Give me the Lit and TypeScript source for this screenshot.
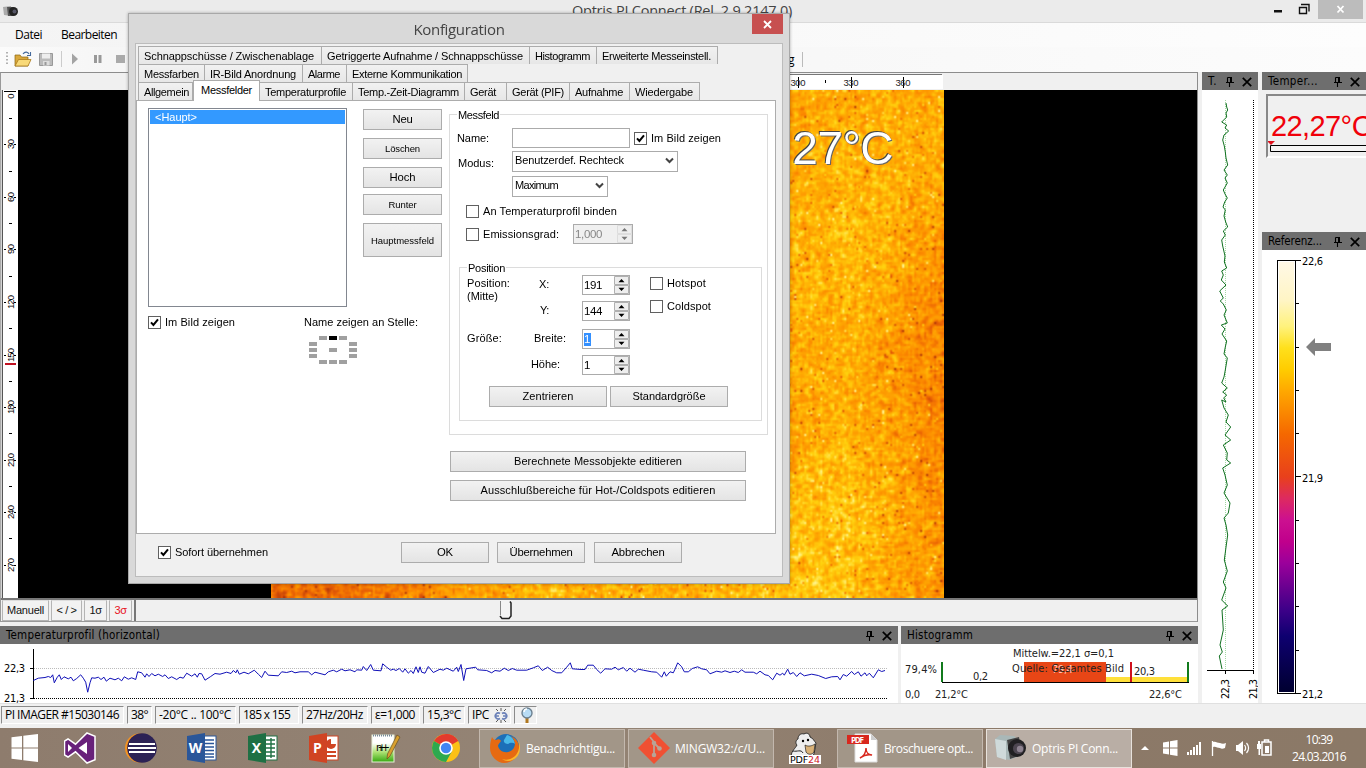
import { LitElement, html, svg, css } from "lit";
import { customElement, property } from "lit/decorators.js";

/** One line of text, tracked so that it fills a given width. */
@customElement("fit-text")
class FitText extends LitElement {
  @property({ type: Number }) w = 0;
  @property() text = "";
  static styles = css`
    :host { display: inline-block; white-space: pre; flex: none; }
  `;
  render() {
    return html`<span>${this.text}</span>`;
  }
  firstUpdated() {
    const span = this.renderRoot.querySelector("span") as HTMLElement;
    if (!this.w || !this.text) return;
    const natural = span.getBoundingClientRect().width;
    span.style.letterSpacing = (this.w - natural) / this.text.length + "px";
  }
}
const f = (text: string, w: number) => html`<fit-text .w=${w} .text=${text}></fit-text>`;

/** Infrared camera picture with sensor noise. */
@customElement("thermal-image")
class ThermalImage extends LitElement {
  static styles = css`
    :host { display: block; width: 673px; height: 508px; }
    canvas { display: block; width: 673px; height: 508px; }
  `;
  render() {
    return html`<canvas width="337" height="254"></canvas>`;
  }
  firstUpdated() {
    const cv = this.renderRoot.querySelector("canvas") as HTMLCanvasElement;
    const c = cv.getContext("2d")!;
    const W = 337, H = 254;
    const img = c.createImageData(W, H);
    let s = 12345;
    const rnd = () => {
      s = (Math.imul(s, 1664525) + 1013904223) >>> 0;
      return s / 4294967296;
    };
    const raw = new Float32Array(W * H).map(() => rnd() + rnd() - 1);
    const cols = new Float32Array(W).map(() => rnd() - 0.5);
    const stops: number[][] = [
      [0, 170, 50, 10], [0.25, 230, 92, 5], [0.45, 252, 135, 0],
      [0.65, 255, 172, 3], [0.82, 255, 212, 15], [1, 255, 246, 150],
    ];
    const g = (x: number, y: number) =>
      raw[Math.min(H - 1, Math.max(0, y)) * W + Math.min(W - 1, Math.max(0, x))];
    for (let y = 0; y < H; y++) {
      for (let x = 0; x < W; x++) {
        const n = g(x, y) * 0.6 + (g(x - 1, y) + g(x + 1, y) + g(x, y - 1) + g(x, y + 1)) * 0.28;
        const u = x / W, v = y / H;
        let t = 0.67 + n * 0.27 + cols[x] * 0.06;
        t -= 0.34 * Math.max(0, 1 - u * 2.4) * (0.4 + 0.6 * v);
        t -= 0.2 * Math.max(0, (u - 0.85) / 0.15) * (0.7 + 0.4 * Math.sin((v - 0.15) * 4));
        t += 0.05 * Math.sin(u * 14 + v * 3) + 0.04 * Math.cos(v * 9 + u * 5);
        const sp = rnd();
        if (sp < 0.014) t -= 0.42;
        else if (sp > 0.99) t += 0.32;
        t = Math.min(1, Math.max(0, t));
        let k = 1;
        while (stops[k][0] < t) k++;
        const a = stops[k - 1], b = stops[k], r = (t - a[0]) / (b[0] - a[0]);
        const o = (y * W + x) * 4;
        for (let i = 0; i < 3; i++) img.data[o + i] = a[i + 1] + (b[i + 1] - a[i + 1]) * r;
        img.data[o + 3] = 255;
      }
    }
    c.putImageData(img, 0, 0);
  }
}

const PROFILE_A =
  "100,540 115,533 135,531 145,528 152,531 158,523 163,547 172,530 178,523 184,537 192,529 205,535 213,530 220,541 230,534 242,523 250,533 257,545 263,575 270,547 275,532 285,533 295,530 303,537 312,530 319,542 330,533 345,538 355,533 365,541 373,529 385,536 395,532 407,537 413,514 425,517 435,530 440,520 447,528 455,519 465,526 475,521 488,528 495,523 505,534 515,529 530,537 540,530 550,533 560,518 575,527 585,520 592,530 597,519 605,520 615,539 632,528 645,519 660,521 680,515 693,519 700,510 708,517 712,508 718,521 732,515 745,520 763,509 775,521 785,531 795,512 805,524 835,526 845,514 860,516 875,512 885,517 900,514 925,514 935,523 945,515 975,523 985,514 1000,509 1010,514 1025,506 1035,511 1050,508 1065,514 1070,508 1085,509 1090,498 1100,510 1112,492 1120,509 1143,511 1148,490 1160,500 1172,509 1180,506 1188,510 1198,504 1208,515 1215,505 1225,518 1233,510 1240,519 1248,499 1255,516 1260,499 1265,515 1275,518 1285,498 1300,516 1320,506 1330,509 1340,503 1360,512";
const PROFILE_B =
  "5,500 10,513 18,492 26,540 33,505 62,500 68,508 95,510 110,517 120,510 135,512 148,503 160,510 172,504 185,509 215,509 235,502 250,496 262,510 278,500 290,510 305,517 320,517 335,500 346,487 352,505 378,507 390,507 398,494 415,494 425,507 437,518 450,505 470,506 480,500 490,508 505,501 515,512 525,503 540,515 550,506 565,509 590,514 605,515 620,530 628,514 634,527 645,514 655,517 660,506 668,487 680,499 688,514 700,514 712,504 728,499 740,505 755,508 765,520 785,512 800,515 810,511 825,516 838,512 850,516 860,508 870,515 895,515 905,520 915,512 930,523 940,525 953,538 965,518 975,524 983,518 988,524 998,506 1005,521 1015,516 1025,528 1035,517 1048,526 1070,521 1090,525 1112,534 1130,529 1148,528 1155,538 1165,522 1175,527 1190,513 1198,522 1210,514 1218,527 1230,517 1235,526 1243,518 1255,532 1270,508 1280,513 1290,510";
const pts = (str: string, dx: number) =>
  str.split(" ").map((p) => {
    const [x, y] = p.split(",").map(Number);
    return `${((x + dx) / 3).toFixed(1)},${((y - 432) / 3 + 0.5).toFixed(1)}`;
  }).join(" ");
const PROFILE = pts(PROFILE_A, 0) + " " + pts(PROFILE_B, 1365);

const VPROFILE =
  "948,103 950,107 953,110 948,113 950,117 935,122 950,125 945,128 956,131 942,135 938,140 943,146 946,152 948,158 953,165 942,170 952,175 945,178 952,183 940,190 945,194 952,198 944,202 939,207 946,210 942,216 947,222 953,227 940,231 946,235 935,240 938,246 945,256 943,262 950,268 935,271 940,275 934,280 948,285 929,291 940,298 931,301 940,304 949,310 942,315 952,323 934,325 945,329 936,334 950,341 946,347 942,354 952,358 946,370 942,377 935,383 952,388 938,392 950,395 941,398 948,402 935,400 942,408 955,415 948,422 962,427 945,435 962,440 940,445 952,453 950,460 962,463 938,468 945,475 952,485 942,493 960,503 955,513 942,518 948,525 953,535 949,545 943,560 952,571 940,582 948,588 935,600 953,606 936,610 940,630 930,645 937,652 928,656 936,669"
    .split(" ").map((p) => {
      const [x, y] = p.split(",").map(Number);
      return `${(x / 3 - 292).toFixed(1)},${y - 90}`;
    }).join(" ");

const pin = svg`<path d="M2.500 1.500h4M2.500 1.500v5M1 6.500h8M4.500 7v4" fill="none" stroke="#000" stroke-width="1.100"/><path d="M5 1h2v5.500H5z"/>`;
const cross = svg`<path d="M.8.8l8.400 8.400M9.200.8L.8 9.200" fill="none" stroke="#000" stroke-width="1.700"/>`;

@customElement("app-root")
class AppRoot extends LitElement {
  static styles = css`
    :host { display: block; width: 1366px; height: 768px; overflow: hidden; position: relative; background: #f0f0f0; color: #000;
      font-family: "Liberation Sans", sans-serif; font-size: 11px; line-height: 13px; }
    * { box-sizing: border-box; }
    svg { display: block; flex: none; }
    .app { display: flex; flex-direction: column; height: 768px; }
    .ui { font-family: "Open Sans", sans-serif; }
    .tah { font-family: "DejaVu Sans Condensed", "DejaVu Sans", sans-serif; }

    .titlebar { height: 23px; background: #ebebeb; border-bottom: 1px solid #dadada; display: flex; align-items: flex-start; }
    .titlebar .ic { margin: 4px 0 0 2px; }
    .titlebar .txt { margin: 1px 0 0 552px; font: 14.5px/20px "Open Sans", sans-serif; color: #444; }
    .titlebar .win { margin-left: auto; display: flex; }
    .menubar { height: 24px; background: linear-gradient(90deg, #f4f4f4, #fdfdfd); display: flex; align-items: center; padding: 0 0 1px 15px; gap: 19px; font-size: 12px; }
    .toolbar { height: 25px; background: linear-gradient(90deg, #fbfbfb 0, #f6f6f6 8%, #f8f8f8 60%, #fcfcfc); display: flex; align-items: center; }
    .toolbar .rest { margin-left: 660px; display: flex; gap: 7px; align-items: center; font-size: 12px; }
    .vsep { width: 1px; height: 15px; background: #bbb; }

    .work { height: 631px; display: grid; grid-template-columns: 1198px 56px 104px; column-gap: 4px; }
    .left { display: flex; flex-direction: column; }
    .viewer { height: 550px; display: flex; flex-direction: column; border-top: 1px solid #8c8c8c; border-right: 1px solid #8c8c8c; border-left: 1px solid #999; border-bottom: 1px solid #999; }
    .scene { height: 508px; display: flex; margin-left: -1px; }
    .black { flex: 1; background: #000; display: flex; padding-left: 253px; position: relative; }
    .reading { position: absolute; left: 712px; top: 33px; font-size: 46px; line-height: 50px; color: #fff;
      text-shadow: -1px -1px 0 #444, 1px 1px 0 #666; }
    .slider { flex: 1; display: flex; align-items: stretch; border-top: 2px solid #777; background: #f0f0f0; padding-left: 1px; gap: 2px; }
    .slider .sb { border: 1px solid #b4b4b4; border-top-color: #ddd; display: flex; align-items: center; justify-content: center; background: #f2f2f2; height: 21px; color: #111; }
    .slider .track { flex: 1; border-left: 2px solid #777; padding-left: 363px; }
    .w47 { width: 47px; } .w31 { width: 31px; } .w23 { width: 23px; }
    .red { color: #e8111c !important; }

    .hdr { background: #6e6e6e; height: 18px; display: flex; align-items: center; color: #000; flex: none; font-size: 11.5px; padding-bottom: 0; }
    .hdr .r { margin-left: auto; display: flex; align-items: center; gap: 8px; padding-right: 6px; padding-top: 1px; }
    .bottom { margin-top: 4px; display: grid; grid-template-columns: 898px 297px; column-gap: 3px; height: 77px; }
    .panel { display: flex; flex-direction: column; background: #fff; overflow: hidden; }
    .pl6 { padding-left: 6px; }
    .right { display: flex; flex-direction: column; background: #fff; overflow: hidden; }
    .tempbox { height: 142px; background: #f0f0f0; padding: 4px 0 0 4px; }
    .tempbox .in { border-top: 2px solid #888; border-left: 2px solid #888; border-bottom: 2px solid #fff; height: 64px; overflow: hidden; padding: 15px 0 0 3px; color: #f0000a; }
    .tempbox .big { font-size: 29px; line-height: 30px; white-space: pre; }
    .tempbox svg { margin: 0 0 0 -4px; }

    .status { height: 25px; background: #f0f0f0; border-top: 1px solid #e0e0e0; display: flex; padding: 2px 0 0 1px; gap: 3px; font: 12px/16px "Open Sans", sans-serif; }
    .cell { height: 18px; border: 1px solid; border-color: #8b8b8b #fff #fff #8b8b8b; padding-left: 3px; display: flex; align-items: center; gap: 4px; }

    .taskbar { height: 40px; background: linear-gradient(90deg, #8e7c6d, #948475 40%, #8c7968 75%, #8b7967); display: flex; align-items: center; position: relative; }
    .taskbar .apps { display: flex; width: 479px; padding-left: 8px; gap: 29px; align-items: center; flex: none; }
    .vs { margin-left: -5px; }
    .tb { height: 39px; border: 1px solid #c3b8ae; background: #a29688; display: flex; align-items: center; color: #fff; font: 12px "Open Sans", sans-serif; flex: none; }
    .tb.on { background: #b9aea5; border-color: #e8e2dc; }
    .pdf24 { width: 62px; display: flex; justify-content: center; flex: none; }
    .tray { display: flex; align-items: center; margin-left: 9px; }
    .clock { color: #fff; font: 12px/17px "Open Sans", sans-serif; display: flex; flex-direction: column; align-items: center; width: 58px; margin-left: 13px; }

    .dialog { position: absolute; left: 128px; top: 13px; width: 662px; height: 571px; background: #d9d9d9; border: 1px solid #a8a8a8; box-shadow: 0 0 3px rgba(0,0,0,.3); padding: 0 6px; }
    .dtitle { height: 29px; display: grid; grid-template-columns: 31px 1fr 31px; font: 15px/30px "Open Sans", sans-serif; color: #444; justify-items: center; }
    .close { width: 31px; height: 20px; background: #c75050; display: flex; align-items: center; justify-content: center; }
    .client { height: 534px; background: #f0f0f0; border: 1px solid #bcbcbc; padding-top: 2px; }
    .tabs { display: flex; height: 18px; padding-left: 2px; }
    .tab { height: 18px; border: 1px solid #acacac; border-bottom: 0; border-left-width: 0; background: linear-gradient(#f1f1f1, #e7e7e7); padding-left: 5px; display: flex; align-items: center; flex: none; padding-top: 1px; }
    .tab:first-child { border-left-width: 1px; }
    .tab.act { background: #fff; height: 21px; margin: -2px 0 0; border: 1px solid #acacac; border-bottom: 0; position: relative; padding: 0 0 1px 7px; }
    .page { width: 640px; height: 434px; border: 1px solid #acacac; background: #fff; padding: 7px 0 0 11px; display: flex; gap: 8px; }
    .lcol { width: 293px; }
    .lrow { display: flex; gap: 16px; }
    .list { width: 199px; height: 199px; border: 1px solid #828790; padding: 1px; flex: none; }
    .sel { height: 14px; background: #3399ff; color: #fff; padding-left: 5px; line-height: 15px; }
    .bcol { display: flex; flex-direction: column; padding-top: 1px; }
    .btn { border: 1px solid #acacac; background: linear-gradient(#f2f2f2, #e4e4e4); height: 21px; display: flex; align-items: center; justify-content: center; flex: none; }
    .b78 { width: 79px; } .b88 { width: 88px; } .b118 { width: 118px; } .b296 { width: 296px; }
    .s12 { font-size: 11.3px; } .s10 { font-size: 9.5px; }
    .mt8 { margin-top: 8px; } .mt6 { margin-top: 6px; } .tall { height: 34px; }
    .lopts { display: flex; justify-content: space-between; margin-top: 9px; padding-right: 23px; }
    .pos { margin: 7px 0 0 161px; }
    .chk { display: flex; align-items: center; gap: 4px; height: 13px; }
    fieldset { margin: 0; padding: 0; border: 1px solid #dcdcdc; min-width: 0; }
    legend { margin-left: 7px; padding: 0 1px; height: 13px; line-height: 14px; }
    .fm { width: 319px; height: 327px; }
    .row { display: flex; align-items: center; height: 20px; margin-left: 7px; }
    .lab { width: 55px; flex: none; }
    .low { padding: 5px 0 0 1px; }
    .inp { width: 118px; height: 20px; border: 1px solid #ababab; margin-right: 4px; }
    .select { height: 21px; border: 1px solid #ababab; display: flex; align-items: center; justify-content: space-between; padding: 0 3px 1px 2px; }
    .s166 { width: 166px; } .s96 { width: 96px; }
    .spin { width: 48px; height: 20px; border: 1px solid #ababab; display: flex; justify-content: space-between; align-items: center; padding: 0 0 0 1px; background: #fff; font-size: 11.5px; }
    .spin.dis { width: 60px; background: #f0f0f0; color: #888; margin-left: 14px; }
    .spin .mark { background: #3390ff; color: #fff; }
    .fp { width: 303px; height: 160px; margin: 17px 0 0 9px; }
    .grid { display: grid; grid-template-columns: 67px 48px 68px auto; grid-template-rows: 26px 28px 26px 20px; padding: 1px 0 0 7px; align-items: start; }
    .c { height: 20px; display: flex; align-items: center; margin-top: -1px; }
    .two { grid-row: span 2; display: flex; flex-direction: column; padding-top: 2px; }
    .g10 { gap: 10px; }
    .frow { display: flex; gap: 3px; margin: 11px 0 0 29px; }
    .wide { margin: 16px 0 0 1px; display: flex; flex-direction: column; gap: 8px; }
    .foot { display: flex; align-items: center; gap: 8px; margin: 8px 0 0 22px; }
    .foot .chk { width: 235px; }
    .ml5 { margin-left: 5px; } .ml6 { margin-left: 6px; } .mlm { margin-left: -3px; } .ml1 { margin-left: 1px; }
    .r1 { margin-top: 7px; } .r2 { margin-top: 3px; } .r3 { margin: 5px 0 0 62px; } .r4 { margin: 9px 0 0 16px; } .r5 { margin: 6px 0 0 16px; }
  `;

  private chk(on: boolean, label: string, w: number) {
    return html`<div class="chk">
      <svg width="13" height="13"><rect x=".5" y=".5" width="12" height="12" fill="#fff" stroke="#606060"/>${on
        ? svg`<path d="M3 6.400L5.400 9 10 3.400" fill="none" stroke="#000" stroke-width="2"/>` : ""}</svg>
      ${f(label, w)}</div>`;
  }
  private spin(v: string, w: number, dis = false, mark = false) {
    const c = dis ? "#777" : "#000";
    return html`<div class="spin ${dis ? "dis" : ""}"><span class="${mark ? "mark" : ""}">${f(v, w)}</span>
      <svg width="15" height="18"><path d="M.5.5h14v8H.5zM.5 9.500h14v8H.5z" fill="#eee" stroke=${dis ? "#ddd" : "#b0b0b0"}/>
      <path d="M7.500 3l3 3.200h-6zM7.500 15l3-3.200h-6z" fill=${c}/></svg></div>`;
  }
  private tab(label: string, tw: number, w: number, act = false) {
    return html`<div class="tab ${act ? "act" : ""}" style="width:${w}px">${f(label, tw)}</div>`;
  }
  private head(title: string, w: number) {
    return html`<div class="hdr tah pl6">${f(title, w)}<div class="r">
      <svg width="9" height="11">${pin}</svg><svg width="10" height="10">${cross}</svg></div></div>`;
  }
  private chevron() {
    return html`<svg width="9" height="7"><path d="M1 1.500l3.500 3.500L8 1.500" fill="none" stroke="#444" stroke-width="2"/></svg>`;
  }

  private dialog() {
    return html`<div class="dialog">
      <div class="dtitle"><span></span>${f("Konfiguration", 91)}
        <div class="close"><svg width="9" height="9"><path d="M1 1l7 7M8 1L1 8" stroke="#fff" stroke-width="1.800"/></svg></div></div>
      <div class="client">
        <div class="tabs">
          ${this.tab("Schnappschüsse / Zwischenablage", 170, 184)}${this.tab("Getriggerte Aufnahme / Schnappschüsse", 196, 208)}
          ${this.tab("Histogramm", 55, 67)}${this.tab("Erweiterte Messeinstell.", 109, 121)}
        </div>
        <div class="tabs">
          ${this.tab("Messfarben", 55, 67)}${this.tab("IR-Bild Anordnung", 86, 98)}${this.tab("Alarme", 32, 44)}${this.tab("Externe Kommunikation", 110, 121)}
        </div>
        <div class="tabs">
          ${this.tab("Allgemein", 45, 55)}${this.tab("Messfelder", 51, 67, true)}${this.tab("Temperaturprofile", 81, 93)}${this.tab("Temp.-Zeit-Diagramm", 101, 112)}
          ${this.tab("Gerät", 26, 42)}${this.tab("Gerät (PIF)", 52, 63)}${this.tab("Aufnahme", 48, 60)}${this.tab("Wiedergabe", 58, 70)}
        </div>
        <div class="page">
          <div class="lcol">
            <div class="lrow">
              <div class="list"><div class="sel">${f("<Haupt>", 42)}</div></div>
              <div class="bcol">
                <div class="btn b78 s12">${f("Neu", 20)}</div>
                <div class="btn b78 s10 mt8">${f("Löschen", 35)}</div>
                <div class="btn b78 s12 mt8">${f("Hoch", 26)}</div>
                <div class="btn b78 s10 mt6">${f("Runter", 28)}</div>
                <div class="btn b78 s10 mt8 tall">${f("Hauptmessfeld", 63)}</div>
              </div>
            </div>
            <div class="lopts">${this.chk(true, "Im Bild zeigen", 70)}${f("Name zeigen an Stelle:", 114)}</div>
            <svg class="pos" width="48" height="28" fill="#a0a0a0">
              <path d="M10 0h8v4h-8zM30 0h8v4h-8zM0 6h8v4H0zM40 6h8v4h-8zM0 12h8v4H0zM20 12h8v4h-8zM40 12h8v4h-8zM0 18h8v4H0zM40 18h8v4h-8zM10 24h8v4h-8zM20 24h8v4h-8zM30 24h8v4h-8z"/>
              <path d="M20 0h8v4h-8z" fill="#000"/></svg>
          </div>
          <div>
            <fieldset class="fm"><legend>${f("Messfeld", 41)}</legend>
              <div class="row r1"><span class="lab">${f("Name:", 32)}</span><div class="inp"></div>${this.chk(true, "Im Bild zeigen", 70)}</div>
              <div class="row r2"><span class="lab low">${f("Modus:", 36)}</span><div class="select s166">${f("Benutzerdef. Rechteck", 109)}${this.chevron()}</div></div>
              <div class="row r3"><div class="select s96">${f("Maximum", 43)}${this.chevron()}</div></div>
              <div class="r4">${this.chk(false, "An Temperaturprofil binden", 134)}</div>
              <div class="row r5">${this.chk(false, "Emissionsgrad:", 76)}${this.spin("1,000", 27, true)}</div>
              <fieldset class="fp"><legend>${f("Position", 37)}</legend>
                <div class="grid">
                  <div class="two"><span>${f("Position:", 43)}</span><span>${f("(Mitte)", 31)}</span></div>
                  <div class="c ml5">${f("X:", 10)}</div>${this.spin("191", 18)}
                  <div class="two g10">${this.chk(false, "Hotspot", 39)}${this.chk(false, "Coldspot", 44)}</div>
                  <div class="c ml6">${f("Y:", 9)}</div>${this.spin("144", 18)}
                  <div class="c">${f("Größe:", 35)}</div><div class="c">${f("Breite:", 32)}</div>${this.spin("1", 7, false, true)}<span></span>
                  <span></span><div class="c mlm">${f("Höhe:", 29)}</div>${this.spin("1", 6)}<span></span>
                </div>
                <div class="frow"><div class="btn b118">${f("Zentrieren", 51)}</div><div class="btn b118">${f("Standardgröße", 73)}</div></div>
              </fieldset>
            </fieldset>
            <div class="wide"><div class="btn b296">${f("Berechnete Messobjekte editieren", 168)}</div>
              <div class="btn b296">${f("Ausschlußbereiche für Hot-/Coldspots editieren", 235)}</div></div>
          </div>
        </div>
        <div class="foot">${this.chk(true, "Sofort übernehmen", 93)}
          <div class="btn b88 s12">${f("OK", 16)}</div><div class="btn b88 s12">${f("Übernehmen", 63)}</div><div class="btn b88 s12 ml1">${f("Abbrechen", 53)}</div></div>
      </div>
    </div>`;
  }

  private hruler() {
    return html`<svg width="1196" height="17" font-size="9.500" font-family="Liberation Sans" text-anchor="middle">
      <rect width="1196" height="17" fill="#f0f0f0"/><rect x="270" y="2" width="672" height="14" fill="#fff"/><path d="M270 1.500h671" stroke="#777"/>
      ${[[797, "300"], [850, "330"], [902, "360"]].map(([x, t]) => svg`<path d="M${x}.5 4v11" stroke="#000"/><text x=${x} y="12.500" textLength="15" fill="#222">${t}</text>`)}
      <path d="M824.500 7v3" stroke="#000"/></svg>`;
  }
  private vruler() {
    const l: [number, string, number][] = [[6, "0", 5], [54, "30", 10], [107, "60", 10], [159, "90", 10], [212, "120", 14], [265, "150", 14], [317, "180", 14], [370, "210", 14], [422, "240", 14], [475, "270", 14]];
    return html`<svg width="18" height="508" font-size="9.500" font-family="Liberation Sans" text-anchor="middle">
      <rect width="18" height="508" fill="#fff"/><rect width="1.500" height="508" fill="#aaa"/><rect x="2" width="1" height="508" fill="#555"/><path d="M4 1.500h12" stroke="#000"/>
      ${l.map(([y, t, w], i) => svg`${i ? svg`<path d="M4 ${y + .5}h2M14 ${y + .5}h2" stroke="#000"/>` : ""}<text transform="translate(13.500 ${y}) rotate(-90)" textLength=${w}>${t}</text>`)}
      ${[28, 81, 133, 186, 238, 291, 343, 396, 448].map((y) => svg`<path d="M9 ${y + .5}h3" stroke="#000"/>`)}
      <rect x="5" y="273" width="11" height="2" fill="#c01020"/></svg>`;
  }

  private histogram() {
    return html`<svg width="297" height="59" class="tah" font-size="11" fill="#222">
      <rect x="123" y="18" width="82" height="20" fill="#e84616"/><rect x="205" y="33" width="81" height="5" fill="#ffe03a"/>
      <path d="M41 38.500h247" stroke="#000"/><path d="M41 18v20M287 18v20" stroke="#117a1c" stroke-width="2"/><path d="M230 18v20" stroke="#d0101c" stroke-width="2"/>
      <text x="4" y="29" textLength="32">79,4%</text><text x="4" y="54" textLength="15">0,0</text>
      <text x="34" y="54" textLength="33">21,2°C</text><text x="248" y="54" textLength="33">22,6°C</text>
      <text x="72" y="36" textLength="15">0,2</text><text x="233" y="31" textLength="21">20,3</text>
      <text x="151" y="29" textLength="21" fill="#ffc8b8">79,4</text>
      <text x="112" y="13" textLength="101">Mittelw.=22,1 σ=0,1</text><text x="111" y="28" textLength="112">Quelle: Gesamtes Bild</text></svg>`;
  }
  private colorbar() {
    const stops: [number, string][] = [[0, "#fff8e6"], [.09, "#fff5c4"], [.15, "#fff27c"], [.2, "#ffe01c"], [.25, "#ffcc00"], [.3, "#ffa800"], [.4, "#f56800"], [.5, "#e8401c"], [.55, "#dd2a60"], [.6, "#cc1090"], [.65, "#c0008c"], [.7, "#9b009b"], [.756, "#6a0090"], [.81, "#3c0088"], [.87, "#0e0070"], [1, "#000030"]];
    return html`<svg width="104" height="453" class="tah" font-size="11">
      <defs><linearGradient id="pal" x1="0" y1="0" x2="0" y2="1">${stops.map(([o, c]) => svg`<stop offset=${o} stop-color=${c}></stop>`)}</linearGradient></defs>
      <rect x="15.500" y="10.500" width="18" height="433" fill="#fff" stroke="#000"/><rect x="17" y="12" width="15" height="430" fill="url(#pal)"/>
      <path d="M34 10.500h5M34 53.500h3M34 97.500h3M34 140.500h3M34 183.500h3M34 226.500h5M34 270.500h3M34 313.500h3M34 356.500h3M34 400.500h3M34 443.500h5" stroke="#000"/>
      <path d="M44 97l9-9v5h16v8H53v5z" fill="#808080"/>
      <text x="40" y="15" textLength="21">22,6</text><text x="40" y="232" textLength="21">21,9</text><text x="40" y="448" textLength="21">21,2</text></svg>`;
  }

  private taskbar() {
    const office = (c: string, l: string, page: unknown) => html`<svg width="32" height="32" viewBox="0 0 32 32">
      <rect x="16" y="4" width="14" height="24" fill="#fff" stroke=${c} stroke-width="1"/>${page}<path d="M1 4L19 1v30L1 28z" fill=${c}/>
      <text x="9.500" y="21" font-family="Open Sans" font-size="14" font-weight="700" fill="#fff" text-anchor="middle">${l}</text></svg>`;
    return html`<div class="taskbar">
      <div class="apps">
        <svg width="32" height="32" fill="#fff"><path d="M3.500 5.300L14 4v11.400H3.500zM15.300 3.800L30 2v13.400H15.300zM3.500 16.600H14V28L3.500 26.700zM15.300 16.600H30V30l-14.700-1.800z"/></svg>
        <svg class="vs" width="32" height="32"><path d="M23 1l8 3.200v23.600L23 31 11.500 19.800 4 25l-3.500-2V9L4 7l7.500 5.200z" fill="#68217a" stroke="#fff" stroke-width="1.500"/><path d="M4 12v8l4-4zM14.500 16l8.500 6V10z" fill="#fff"/></svg>
        <svg width="32" height="32"><circle cx="14.500" cy="16" r="14.500" fill="#f39322"/><circle cx="17" cy="16" r="14.800" fill="#2c2255"/><path d="M4 12h26M3 16h28M4 20h26" stroke="#fff" stroke-width="2"/></svg>
        ${office("#2a5699", "W", svg`<path d="M19 8h9M19 11.500h9M19 15h9M19 18.500h9M19 22h9M19 25h9" stroke="#2a5699" stroke-width="1.500"/>`)}
        ${office("#1f7044", "X", svg`<path d="M19 8h9M19 12h9M19 16h9M19 20h9M19 24h9M24 6v20" stroke="#1f7044" stroke-width="1.400"/>`)}
        ${office("#d04423", "P", svg`<circle cx="23" cy="12" r="5" fill="#d04423"/><path d="M23 12V6a6 6 0 016 6z" fill="#fff"/><path d="M19 20h9M19 24h9" stroke="#d04423" stroke-width="1.800"/>`)}
        <svg width="32" height="32"><defs><linearGradient id="np" x1="0" y1="0" x2="0" y2="1"><stop offset="0.300" stop-color="#fff"></stop><stop offset=".65" stop-color="#a8e070"></stop><stop offset="1" stop-color="#35a810"></stop></linearGradient></defs>
          <rect x="3" y="3" width="22" height="27" fill="url(#np)" stroke="#e8f0d8"/><path d="M4 3.500h20" stroke="#789" stroke-dasharray="1 1" stroke-width="2"/>
          <text x="7" y="19" font-family="DejaVu Sans" font-size="10" textLength="14">n++</text><path d="M28 3l3 2-10 19-3 3 .500-5z" fill="#d8a030" stroke="#6a5020" stroke-width=".7"/></svg>
        <svg width="32" height="32"><circle cx="16" cy="16" r="14" fill="#fbc116"/><path d="M16 16L3.900 9A14 14 0 0128.100 9z" fill="#e33b2e"/><path d="M16 16L3.900 9A14 14 0 0016 30l6-11z" fill="#2da94f"/><path d="M16 9h12.100A14 14 0 0016 2z" fill="#e33b2e"/><circle cx="16" cy="16" r="6.800" fill="#fff"/><circle cx="16" cy="16" r="5.200" fill="#4285f4"/></svg>
      </div>
      <div class="tb" style="width:146px;padding-left:9px">
        <svg width="32" height="32"><circle cx="17" cy="15" r="13" fill="#1c6fb8"/><path d="M18 3a10 10 0 018 9c-3-2-5-1-7 0-2 0-5-1-4-4z" fill="#49b8e8"/><path d="M3 5c1 2 2 3 4 3 2-1 4-1 5 1-1 2-3 3-3 5 1 4 5 7 10 6 5-1 7-5 7-9-1-3-2-5-4-7 6 3 9 8 8 14-1 8-8 13-15 13C8 31 1 24 1 16 1 11 2 8 3 5z" fill="#e66a12"/><path d="M28 6c3 5 3 12-1 17-4 4-9 6-14 4 7 5 18 0 18-11 0-4-1-7-3-10z" fill="#fbb72a"/></svg>
        <span class="ml5">${f("Benachrichtigu...", 89)}</span></div>
      <div class="tb" style="width:146px;margin-left:3px;padding-left:9px">
        <svg width="32" height="32"><path d="M16 0l16 16-16 16L0 16z" fill="#f05033"/><path d="M12 5l4 5v13M16 11l5 5" fill="none" stroke="#b9a396" stroke-width="1.800"/><circle cx="16" cy="11" r="2.300" fill="#b9a396"/><circle cx="16" cy="23" r="2.300" fill="#b9a396"/><circle cx="21.500" cy="16.500" r="2.300" fill="#b9a396"/></svg>
        <span class="ml5">${f("MINGW32:/c/U...", 90)}</span></div>
      <div class="pdf24"><svg width="34" height="34"><path d="M3 25c1-6 4-7 6-11-2-2-1-5 1-6 0-4 3-6 6-5 3-2 6 0 6 3 3 1 4 4 6 6-1 3-1 10-3 13z" fill="#eee" stroke="#222" stroke-width=".9"/><path d="M17 14c3 2 7 1 10-1l-1 8c-2 3-6 3-8 0z" fill="#d9b177" stroke="#222" stroke-width=".7"/><circle cx="15" cy="10" r="1.200"/><circle cx="20" cy="9" r="1.200"/><path d="M5 20c4 1 8-2 10 2" stroke="#222" fill="none"/>
        <rect x="1" y="24" width="32" height="9" fill="#fff"/><text x="2" y="32" font-family="DejaVu Sans" font-size="9.500" textLength="30">PDF<tspan fill="#d01828">24</tspan></text></svg></div>
      <div class="tb" style="width:146px;padding-left:9px;margin-left:1px">
        <svg width="32" height="32"><path d="M8 2h16l6 6v22H8z" fill="#fff" stroke="#ddd"/><path d="M24 2v6h6z" fill="#ccc"/><rect x="0" y="3" width="22" height="9" fill="#d8281e"/><text x="4" y="10.500" font-family="Open Sans" font-size="8" font-weight="700" fill="#fff" textLength="13">PDF</text>
        <path d="M13 26c4-2 6-6 6-10 0 5 3 7 6 7-4-1-8 0-12 3z" fill="none" stroke="#d8281e" stroke-width="1.500"/></svg>
        <span class="ml5">${f("Broschuere opt...", 89)}</span></div>
      <div class="tb on" style="width:146px;margin-left:3px;padding-left:8px">
        <svg width="32" height="32"><path d="M0 7l5-4 14 1 3 3v18l-8 3L2 25z" fill="#a9b8b8"/><path d="M0 7l11 2v19l-9-3z" fill="#cfdada"/><path d="M12 8l12-3 3 18-12 4z" fill="#444"/><circle cx="22" cy="16" r="9" fill="#202022"/><circle cx="23.500" cy="16.500" r="5.500" fill="#4c4650"/><circle cx="25" cy="17" r="3.200" fill="#8d8390"/></svg>
        <span class="ml5">${f("Optris PI Conn...", 86)}</span></div>
      <svg class="tray" width="136" height="20" fill="#fff">
        <path d="M0 12l4-4 4 4z"/><path d="M22 4.500l6-1v6h-6zM29 3.300L36.500 2v7.500H29zM22 10.500h6v6l-6-1zM29 10.500h7.500V18L29 16.700z"/>
        <path d="M46 14h2v3h-2zM49 12h2v5h-2zM52 9h2v8h-2zM55 7h2v10h-2zM58 4h2v13h-2z"/>
        <path d="M71.500 3v15" stroke="#fff" stroke-width="1.300"/><path d="M72 4c3-1 4 1 7 1v5c-3 0-4-2-7-1zM79 5c2 1 4 1 6 0l-1 5c-2 1-4 1-5 0z"/>
        <path d="M95 7h2l5-4v14l-5-4h-2z"/><path d="M103.500 7c1.500 2 1.500 4 0 6M105.500 5c2.500 3 2.500 7 0 10" fill="none" stroke="#fff" stroke-width="1.200"/>
        <path d="M121 4h9v13h-9zM123.500 2h4v2h-4z" fill="none" stroke="#fff" stroke-width="1.500"/><path d="M124 8h4v7h-4zM117 3v3h-1v5h1.500v6h1.500v-6h1V6h-1V3"/></svg>
      <div class="clock">${f("10:39", 27)}${f("24.03.2016", 54)}</div>
    </div>`;
  }

  render() {
    const cell = (t: string, tw: number, w: number) => html`<div class="cell" style="width:${w}px">${f(t, tw)}</div>`;
    return html`<div class="app">
      <div class="titlebar">
        <svg class="ic" width="18" height="14"><path d="M1 3l8-1v10l-7-1z" fill="#aaa"/><path d="M5 3h6v9H6z" fill="#555"/><circle cx="11.500" cy="7.500" r="4.500" fill="#222"/><circle cx="12.500" cy="7.500" r="2" fill="#556"/></svg>
        <div class="txt">${f("Optris PI Connect (Rel. 2.9.2147.0)", 220)}</div>
        <svg class="win" width="92" height="19"><rect x="44" width="45" height="19" fill="#bcbcbc"/><path d="M0 10h8v2.500H0z" fill="#111"/><path d="M25.500 7.500h7v6h-7zM27 4.500h8v7" fill="none" stroke="#111" stroke-width="1.400"/><path d="M63.500 6l6 6.500M69.500 6l-6 6.500" stroke="#fff" stroke-width="1.800"/></svg>
      </div>
      <div class="menubar ui">${f("Datei", 27)}${f("Bearbeiten", 56)}</div>
      <div class="toolbar">
        <svg width="128" height="25"><path d="M7 5v14" stroke="#999" stroke-width="1.500" stroke-dasharray="1.500 2"/>
          <path d="M15 8h5l1.500 2H28v9H15z" fill="#d9a83c" stroke="#8a6410" stroke-width=".7"/><path d="M15 19l3.500-6.500H31L28 19z" fill="#f8d978" stroke="#a87a1c" stroke-width=".8"/><path d="M23 7c2-3 5-2 6 0M30.500 5v3.500H27" fill="none" stroke="#456a9c" stroke-width="1.100"/>
          <path d="M39.500 6.500h13v12h-13z" fill="#bbb" stroke="#999"/><path d="M42 6.500h8v5h-8z" fill="#eee"/><path d="M43 14h6.500v4.500H43z" fill="#ddd"/><path d="M44.500 15h2v3h-2z" fill="#999"/>
          <path d="M61.500 4v16" stroke="#ccc"/><path d="M72 6.500l6 5.500-6 5.500z" fill="#a4a4a4"/><path d="M94 8h3v8h-3zM98.500 8h3v8h-3z" fill="#999"/><path d="M116 8h9v8h-9z" fill="#aaa"/></svg>
        <div class="rest ui"><span>g</span><div class="vsep"></div></div>
      </div>
      <div class="work">
        <div class="left">
          <div class="viewer">
            ${this.hruler()}
            <div class="scene">${this.vruler()}<div class="black"><thermal-image></thermal-image><div class="reading">${f("22,27°C", 163)}</div></div></div>
            <div class="slider"><div class="sb w47">${f("Manuell", 37)}</div><div class="sb w31">${f("< / >", 20)}</div><div class="sb w23">${f("1σ", 12)}</div><div class="sb w23 red">${f("3σ", 12)}</div>
              <div class="track"><svg width="14" height="20"><path d="M1 0v16l3 3h6l2-3V0z" fill="#f4f4f4"/><path d="M1.500 1v14" stroke="#888"/><path d="M1 16l2 2.500h7l2-2.500V3l-1-1.500" fill="none" stroke="#222" stroke-width="1.500"/></svg></div></div>
          </div>
          <div class="bottom">
            <div class="panel">${this.head("Temperaturprofil (horizontal)", 154)}
              <svg width="898" height="59" class="tah" font-size="11"><path d="M34 24.500h854" stroke="#bbb" stroke-dasharray="1 1"/><path d="M34 54.500h854" stroke="#000" stroke-dasharray="1 1"/><path d="M33.500 5v50M30 24.500h3M30 54.500h3" stroke="#000"/>
                <polyline points=${PROFILE} fill="none" stroke="#1010b8" stroke-width="1"/><text x="4" y="28" textLength="21">22,3</text><text x="4" y="58" textLength="21">21,3</text></svg></div>
            <div class="panel">${this.head("Histogramm", 66)}${this.histogram()}</div>
          </div>
        </div>
        <div class="panel">${this.head("T.", 9)}
          <svg width="56" height="613" class="tah" font-size="11"><path d="M23.500 10v570" stroke="#a4d8a4" stroke-dasharray="1 1"/><path d="M51.500 10v570" stroke="#000" stroke-dasharray="1 1"/><path d="M5 580.500h47M23.500 580v4M51.500 580v4" stroke="#000"/>
            <polyline points=${VPROFILE} fill="none" stroke="#107020" stroke-width="1"/><text transform="translate(27 609) rotate(-90)" textLength="20">22,3</text><text transform="translate(55 609) rotate(-90)" textLength="20">21,3</text></svg></div>
        <div class="right">${this.head("Temper...", 50)}
          <div class="tempbox"><div class="in"><div class="big">${f("22,27°C", 101)}</div>
            <svg width="100" height="13"><path d="M0 0h8L4 4z" fill="#e0101c"/><path d="M3.500 4.500h96v6h-96z" fill="#f4f4f4" stroke="#000"/></svg></div></div>
          ${this.head("Referenz...", 54)}${this.colorbar()}</div>
      </div>
      <div class="status">
        ${cell("PI IMAGER #15030146", 114, 123)}${cell("38°", 17, 25)}${cell("-20°C .. 100°C", 72, 81)}${cell("185 x 155", 47, 60)}${cell("27Hz/20Hz", 57, 66)}${cell("ε=1,000", 40, 49)}${cell("15,3°C", 34, 42)}
        <div class="cell" style="width:43px">${f("IPC", 17)}<svg width="16" height="15"><path d="M7 5.500a3 3 0 10 0 5M9 5.500a3 3 0 110 5M3 8h3M10 8h3" fill="none" stroke="#6a80b8" stroke-width="1.700"/><path d="M3 1l2 2M8 0v3M13 1l-2 2M3 14l2-2M8 15v-3M13 14l-2-2" stroke="#333" stroke-width=".8"/></svg></div>
        <div class="cell" style="width:23px"><svg width="18" height="16"><path d="M9 10v6" stroke="#b07820" stroke-width="3"/><circle cx="9" cy="6" r="5" fill="#b8dcf4" stroke="#6c8090" stroke-width="1.400"/><path d="M6 5a3 3 0 013-3" stroke="#fff" fill="none" stroke-width="1.500"/></svg></div>
      </div>
      ${this.taskbar()}
    </div>${this.dialog()}`;
  }
}
